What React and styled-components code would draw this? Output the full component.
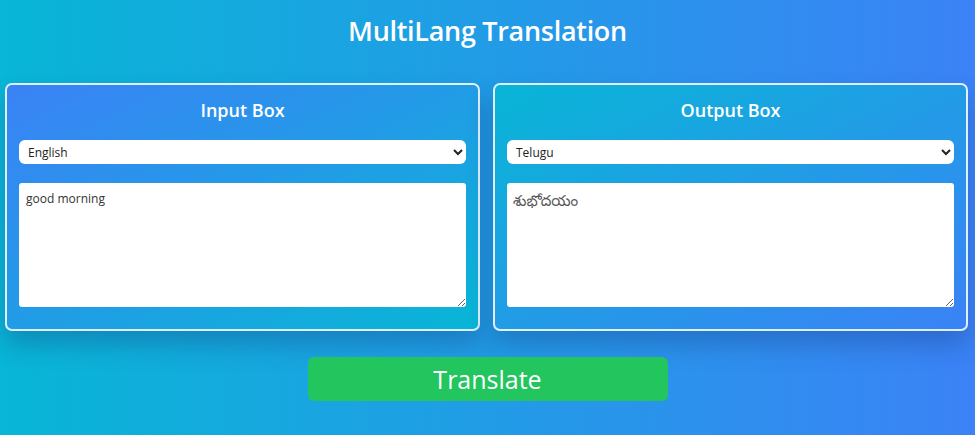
import React, { useState } from "react";
import styled, { createGlobalStyle } from "styled-components";

const Global = createGlobalStyle`
  html, body {
    margin: 0;
    padding: 0;
    height: 100%;
  }
  body {
    background: linear-gradient(to right, #08b6d6, #3b82f6);
    font-family: "Open Sans", "Noto Sans", "Noto Sans Telugu", sans-serif;
    overflow: hidden;
  }
  #root { height: 100%; }
`;

const Page = styled.div`
  height: 435px;
  display: flex;
  flex-direction: column;
  align-items: stretch;
`;

const Title = styled.h1`
  margin: 0;
  padding-top: 12px;
  font-size: 27px;
  line-height: 38px;
  font-weight: 600;
  color: #ffffff;
  text-align: center;
  letter-spacing: -0.3px;
`;

const Boxes = styled.div`
  display: grid;
  grid-template-columns: 1fr 1fr;
  gap: 13px;
  padding: 0 7px 0 5px;
  margin-top: 33px;
`;

const Box = styled.section`
  box-sizing: border-box;
  height: 248px;
  border: 2px solid rgba(255, 255, 255, 0.85);
  border-radius: 7px;
  padding: 12px 12px 22px;
  display: flex;
  flex-direction: column;
  background: ${(p) =>
    p.$flip
      ? "linear-gradient(to bottom right, #08b6d6, #3b82f6)"
      : "linear-gradient(to bottom right, #3b82f6, #08b6d6)"};
  box-shadow: 0 14px 24px rgba(20, 50, 120, 0.3);
`;

const BoxTitle = styled.h2`
  margin: 0 0 17px;
  font-size: 18px;
  line-height: 26px;
  font-weight: 600;
  color: #ffffff;
  text-align: center;
`;

const Select = styled.select`
  box-sizing: border-box;
  height: 24px;
  width: 100%;
  border: none;
  border-radius: 6px;
  background: #ffffff;
  padding: 0 4px 0 5px;
  font-family: "Open Sans", "Noto Sans", sans-serif;
  font-size: 12px;
  color: #222;
  outline: none;
`;

const Area = styled.textarea`
  box-sizing: border-box;
  margin-top: 19px;
  width: 100%;
  height: 124px;
  border: none;
  border-radius: 3px;
  background: #ffffff;
  padding: ${(p) => (p.$muted ? "6px 6px" : "7px 7px")};
  font-family: "Open Sans", "Noto Sans", "Noto Sans Telugu", sans-serif;
  font-size: ${(p) => (p.$muted ? "15px" : "12px")};
  line-height: ${(p) => (p.$muted ? "22px" : "18px")};
  color: ${(p) => (p.$muted ? "#555" : "#333")};
  resize: vertical;
  outline: none;
`;

const Button = styled.button`
  align-self: center;
  margin-top: 26px;
  width: 360px;
  height: 44px;
  border: none;
  border-radius: 6px;
  background: #22c55e;
  color: #ffffff;
  font-family: "Open Sans", "Noto Sans", sans-serif;
  font-size: 25px;
  font-weight: 400;
  cursor: pointer;
`;

export default function App() {
  const [src, setSrc] = useState("English");
  const [dst, setDst] = useState("Telugu");
  const [text, setText] = useState("good morning");
  return (
    <>
      <Global />
      <Page>
        <Title>MultiLang Translation</Title>
        <Boxes>
          <Box>
            <BoxTitle>Input Box</BoxTitle>
            <Select value={src} onChange={(e) => setSrc(e.target.value)}>
              <option>English</option>
              <option>Telugu</option>
              <option>Hindi</option>
            </Select>
            <Area value={text} onChange={(e) => setText(e.target.value)} />
          </Box>
          <Box $flip>
            <BoxTitle>Output Box</BoxTitle>
            <Select value={dst} onChange={(e) => setDst(e.target.value)}>
              <option>Telugu</option>
              <option>English</option>
              <option>Hindi</option>
            </Select>
            <Area $muted value="శుభోదయం" readOnly />
          </Box>
        </Boxes>
        <Button>Translate</Button>
      </Page>
    </>
  );
}
